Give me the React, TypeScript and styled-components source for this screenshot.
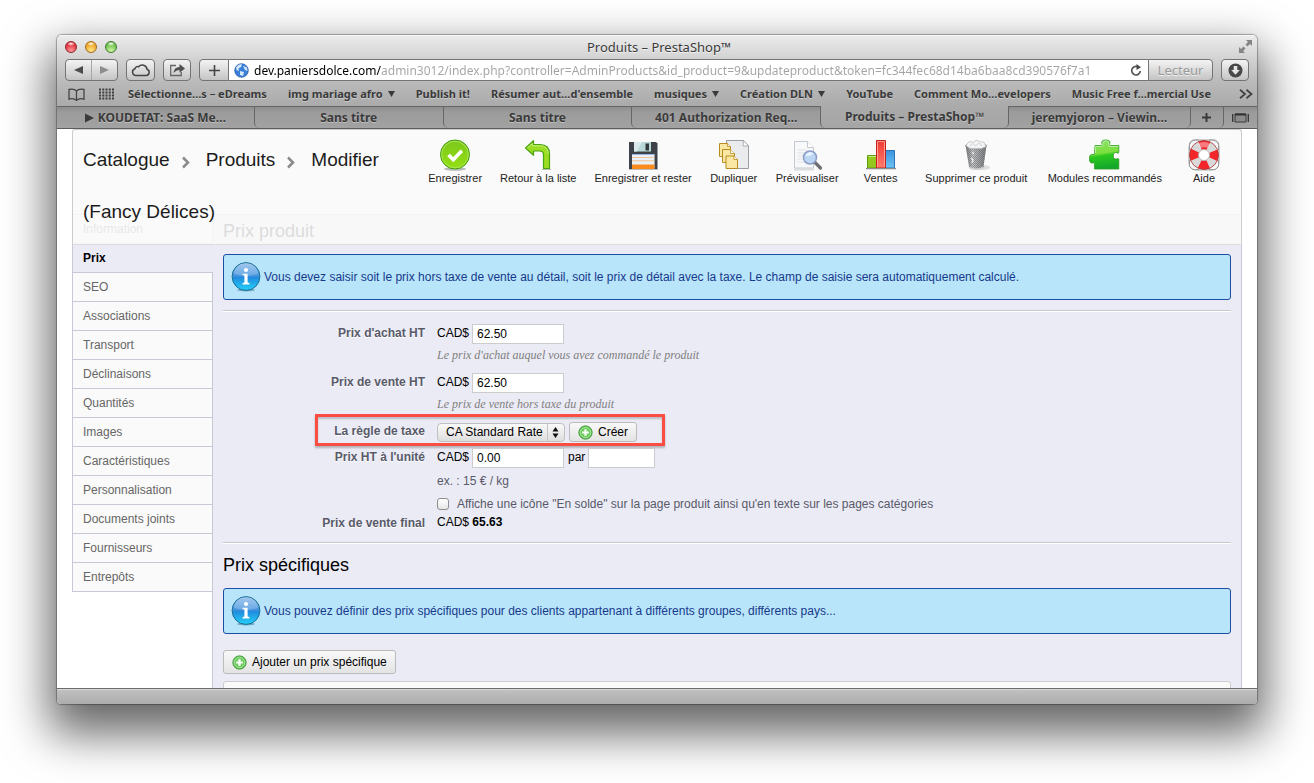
import React from 'react';
import styled, { createGlobalStyle, css } from 'styled-components';

const CHROME_FONT = '"Noto Sans", "Open Sans", sans-serif';
const PAGE_FONT = '"Liberation Sans", Arial, sans-serif';

const GlobalStyle = createGlobalStyle`
  *, *::before, *::after { box-sizing: border-box; }
  body { margin: 0; background: #fff; }
  h1, h4, p, ul { margin: 0; padding: 0; }
  ul { list-style: none; }
  button, input, select { margin: 0; font: inherit; color: inherit; }
  a { color: inherit; text-decoration: none; }
  svg { display: block; flex: none; }
`;

/* ---------- desktop and browser window ---------- */

const Desktop = styled.div`
  height: 100vh;
  padding: 35px 57px 79px;
  overflow: hidden;
  font-family: ${PAGE_FONT};
`;

const BrowserWindow = styled.div`
  display: flex;
  flex-direction: column;
  height: 100%;
  min-width: 0;
  border-radius: 5px 5px 4px 4px;
  background: #fff;
  box-shadow: 0 0 1px 1px rgba(0, 0, 0, 0.3), 0 22px 46px 8px rgba(0, 0, 0, 0.6);
  overflow: hidden;
`;

const Chrome = styled.header`
  flex: none;
  background: linear-gradient(#ececec 0, #d2d2d2 24px, #b9b9b9 48px, #aaa 72px, #a6a6a6 94px);
  border-bottom: 1px solid #5c5c5c;
  font-family: ${CHROME_FONT};
  color: #3a3a3a;
`;

const TitleBar = styled.div`
  display: grid;
  grid-template-columns: 80px 1fr 80px;
  align-items: center;
  height: 23px;
  padding: 0 4px 0 8px;
  box-shadow: inset 0 1px 0 #f6f6f6;
`;

const Lights = styled.div`
  display: flex;
  gap: 8px;
`;

const Light = styled.button<{ $dark: string; $mid: string; $glow: string }>`
  width: 12px;
  height: 12px;
  padding: 0;
  border: 1px solid ${p => p.$dark};
  border-radius: 50%;
  background: radial-gradient(ellipse 4px 2px at 50% 18%, #fff 0, transparent 100%),
    radial-gradient(circle at 50% 90%, ${p => p.$glow} 0, ${p => p.$mid} 70%);
`;

const WindowTitle = styled.div`
  text-align: center;
  font-size: 13px;
  line-height: 20px;
  white-space: nowrap;
  text-shadow: 0 1px 0 #f4f4f4;
`;

const TitleEnd = styled.div`
  display: flex;
  justify-content: flex-end;
`;

const Toolbar = styled.div`
  display: flex;
  align-items: center;
  height: 24px;
  gap: 8px;
  padding: 0 8px;
`;

const chromeButton = css`
  display: flex;
  align-items: center;
  justify-content: center;
  height: 22px;
  padding: 0;
  border: 1px solid #747474;
  background: linear-gradient(#f4f4f4, #c4c4c4);
`;

const ChromeButton = styled.button<{ $width: number }>`
  ${chromeButton}
  flex: none;
  width: ${p => p.$width}px;
  border-radius: 4px;
`;

const Segments = styled.div`
  display: flex;
  flex: none;
  width: 53px;
  border: 1px solid #747474;
  border-radius: 4px;
  background: linear-gradient(#f4f4f4, #c4c4c4);
`;

const Segment = styled.button`
  display: flex;
  flex: 1;
  align-items: center;
  justify-content: center;
  height: 20px;
  padding: 0;
  border: 0;
  background: none;
  & + & { border-left: 1px solid #a6a6a6; }
`;

const AddressGroup = styled.div`
  display: flex;
  flex: 1;
  min-width: 0;
`;

const AddButton = styled.button`
  ${chromeButton}
  width: 30px;
  border-radius: 4px 0 0 4px;
`;

const AddressBox = styled.div`
  display: flex;
  flex: 1;
  align-items: center;
  min-width: 0;
  height: 22px;
  padding: 0 6px 0 5px;
  gap: 5px;
  border: solid #747474;
  border-width: 1px 0;
  background: #fff;
`;

const AddressInput = styled.input`
  flex: 1;
  min-width: 0;
  height: 20px;
  padding: 0;
  margin-right: 4px;
  border: 0;
  outline: 0;
  color: transparent;
  background: linear-gradient(90deg, #000 127px, #a3a3a3 127px);
  background-clip: text;
  -webkit-background-clip: text;
  font-size: 12px;
`;

const RefreshButton = styled.button`
  padding: 0;
  border: 0;
  background: none;
`;

const ReaderButton = styled.button`
  ${chromeButton}
  width: 65px;
  border-radius: 0 4px 4px 0;
  color: #9a9a9a;
  font-size: 13px;
  text-shadow: 0 1px 0 #eee;
`;

const BookmarkBar = styled.nav`
  display: flex;
  align-items: center;
  height: 24px;
  padding: 0 4px 0 11px;
  gap: 14px;
`;

const Bookmarks = styled.div`
  display: flex;
  flex: 1;
  justify-content: space-between;
  min-width: 0;
  margin-right: 14px;
`;

const Bookmark = styled.a`
  display: flex;
  align-items: center;
  gap: 5px;
  font-size: 11px;
  line-height: 16px;
  font-weight: 700;
  white-space: nowrap;
  text-shadow: 0 1px 0 #ccc;
`;

const TabStrip = styled.div`
  display: flex;
  height: 22px;
`;

const Tab = styled.button<{ $grow: number; $side: 'left' | 'active' | 'right'; $edge?: boolean }>`
  flex: ${p => p.$grow} 1 0;
  display: flex;
  align-items: center;
  justify-content: center;
  gap: 4px;
  min-width: 0;
  padding: 0;
  border: 0 solid #666;
  background: linear-gradient(#8e8e8e, #9b9b9b 5px, #a2a2a2);
  font-size: 12px;
  line-height: 16px;
  font-weight: 700;
  white-space: nowrap;
  text-shadow: 0 1px 0 #c0c0c0;
  border-top-width: 1px;
  ${p => p.$side === 'left' && css`border-left-width: ${p.$edge ? 0 : 1}px; border-bottom-left-radius: 5px;`}
  ${p => p.$side === 'right' && css`border-right-width: ${p.$edge ? 0 : 1}px; border-bottom-right-radius: 5px;`}
  ${p => p.$side === 'active' && css`
    background: transparent;
    border-width: 0 1px;
    border-radius: 0 0 5px 5px;
  `}
`;

const SmallTab = styled(Tab)`
  flex: 0 0 33px;
`;

const StatusBar = styled.footer`
  flex: none;
  height: 16px;
  border-top: 1px solid #6b6b6b;
  box-shadow: inset 0 1px 0 #d8d8d8;
  background: linear-gradient(#c2c2c2, #acacac);
`;

/* ---------- web page ---------- */

const Viewport = styled.div`
  position: relative;
  flex: 1;
  min-height: 0;
  padding: 0 15px;
  overflow: hidden;
  font-size: 12px;
  line-height: 16px;
`;

const PageHeader = styled.div`
  position: absolute;
  z-index: 1;
  top: 0;
  left: 15px;
  right: 15px;
  display: flex;
  justify-content: space-between;
  height: 116px;
  padding: 4px 13px 0 10px;
  border: 1px solid #ccc;
  border-bottom-color: #ddd;
  border-radius: 3px 3px 0 0;
  background: rgba(249, 249, 249, 0.88);
`;

const Breadcrumb = styled.h1`
  flex: 0 0 325px;
  font-size: 19px;
  line-height: 52px;
  font-weight: 400;
  color: #1c1c1c;
`;

const CrumbArrow = styled.svg`
  display: inline-block;
  margin: 0 16px 0 12px;
  vertical-align: -3px;
`;

const Actions = styled.ul`
  display: flex;
  gap: 18px;
  padding-top: 5px;
`;

const ActionItem = styled.li<{ $min?: number }>`
  min-width: ${p => p.$min ?? 48}px;
`;

const ActionLink = styled.a`
  display: flex;
  flex-direction: column;
  align-items: center;
  font-size: 11px;
  line-height: 14px;
  color: #222;
  white-space: nowrap;
`;

const Columns = styled.div`
  display: flex;
  margin-top: 85px;
  min-height: 100%;
  border-top: 1px solid #ccc;
`;

const SideMenu = styled.ul`
  flex: 0 0 140px;
`;

const SideItem = styled.li<{ $active?: boolean }>`
  height: 29px;
  border: solid #c8c8d8;
  border-width: 0 0 1px 1px;
  background: #fafafa;
  color: #666;
  ${p => p.$active && css`
    position: relative;
    margin-right: -1px;
    background: #ebebf5;
    color: #000;
    font-weight: 700;
  `}
`;

const SideLink = styled.a`
  display: block;
  padding: 0 10px;
  line-height: 28px;
`;

const Content = styled.main`
  flex: 1;
  min-width: 0;
  padding: 4px 10px 0;
  border: solid #c8c8d8;
  border-width: 0 1px;
  background: #ebebf5;
`;

const SectionTitle = styled.h4`
  margin-bottom: 11px;
  font-size: 18px;
  line-height: 24px;
  font-weight: 400;
  color: #000;
`;

const Notice = styled.p`
  display: flex;
  align-items: center;
  gap: 3px;
  min-height: 46px;
  padding: 0 7px;
  border: 1px solid #1c4fa3;
  border-radius: 3px;
  background: #b8e5fa;
  color: #17398c;
`;

const Rule = styled.hr`
  height: 2px;
  margin: 10px 0 9px;
  border: 0;
  border-top: 1px solid #c8c8c8;
  background: #fff;
`;

const Form = styled.form`
  padding: 3px 0 0;
`;

const Row = styled.div<{ $tight?: boolean }>`
  position: relative;
  display: grid;
  grid-template-columns: 202px 1fr;
  column-gap: 12px;
  margin-bottom: ${p => (p.$tight ? 0 : 6)}px;
`;

const Label = styled.label`
  text-align: right;
  line-height: 18px;
  font-weight: 700;
  color: #585a69;
  text-shadow: 0 1px 0 #fff;
`;

const Line = styled.div`
  display: flex;
  align-items: center;
  gap: 4px;
  min-height: 20px;
  color: #000;
`;

const Field = styled.div`
  display: flex;
  gap: 3px;
`;

const Currency = styled.span`
  line-height: 18px;
`;

const TextInput = styled.input<{ $width: number }>`
  width: ${p => p.$width}px;
  height: 20px;
  padding: 0 4px;
  border: 1px solid #ccc;
  background: #fff;
`;

const Hint = styled.div`
  font-family: "Liberation Serif", Georgia, serif;
  font-size: 12px;
  line-height: 23px;
  font-style: italic;
  color: #7f7f7f;
`;

const Example = styled.div`
  line-height: 26px;
  color: #585a69;
`;

const CheckLine = styled.div`
  display: flex;
  align-items: center;
  gap: 8px;
  height: 20px;
  color: #585a69;
`;

const CheckBox = styled.input`
  appearance: none;
  width: 12px;
  height: 12px;
  border: 1px solid #8e8e8e;
  border-radius: 3px;
  background: linear-gradient(#fff, #e6e6e6);
`;

const SelectWrap = styled.div`
  position: relative;
  width: 128px;
`;

const Select = styled.select`
  appearance: none;
  display: block;
  width: 100%;
  height: 19px;
  padding: 0 18px 0 8px;
  border: 1px solid #c0c0c0;
  border-radius: 4px;
  background: linear-gradient(90deg, transparent 109px, #c4c4c4 109px, #c4c4c4 110px, transparent 110px),
    linear-gradient(#fafafa, #dedede);
  line-height: 16px;
`;

const SelectArrows = styled.svg`
  position: absolute;
  top: 4px;
  right: 6px;
  pointer-events: none;
`;

const GreyButton = styled.button<{ $tall?: boolean }>`
  display: flex;
  align-items: center;
  gap: 5px;
  height: ${p => (p.$tall ? 24 : 20)}px;
  padding: 0 8px;
  border: 1px solid #bbb;
  border-radius: 3px;
  background: linear-gradient(#f9f9f9, #e3e3e3);
  color: #000;
  white-space: nowrap;
`;

const Highlight = styled.div`
  position: absolute;
  top: -8px;
  left: 92px;
  width: 350px;
  height: 32px;
  border: 3px solid #fc4d43;
  box-shadow: 0 2px 2px rgba(0, 0, 0, 0.25), inset 0 2px 2px rgba(0, 0, 0, 0.2);
  pointer-events: none;
`;

const AddRow = styled.div`
  padding: 16px 0 7px;
`;

const PricePanel = styled.section`
  height: 60px;
  border: 1px solid #ccc;
  border-radius: 3px 3px 0 0;
  background: #fafafa;
`;

/* ---------- icons ---------- */

const InfoIcon = () => (
  <svg width="30" height="30" viewBox="0 0 30 30">
    <defs>
      <linearGradient id="info" x1="0" y1="0" x2="0" y2="1">
        <stop offset="0" stopColor="#8ab9e8" /><stop offset=".5" stopColor="#3c8fdc" />
        <stop offset=".52" stopColor="#2189dd" /><stop offset="1" stopColor="#24d2fa" />
      </linearGradient>
    </defs>
    <ellipse cx="15" cy="28" rx="9" ry="1.5" fill="#4b8ba8" opacity=".7" />
    <circle cx="15" cy="14.5" r="13.9" fill="url(#info)" stroke="#176f96" strokeWidth="1" />
    <path d="M3 12a12 11 0 0 1 24 0q-12 4-24 0z" fill="#fff" opacity=".22" />
    <circle cx="15" cy="8" r="2.1" fill="#fff" />
    <path d="M11.6 11.7h5v8.8l1.8.6v1.3h-6.8v-1.3l1.8-.6v-6.9l-1.8-.6z" fill="#fff" />
  </svg>
);

const PlusIcon = () => (
  <svg width="15" height="15" viewBox="0 0 15 15">
    <circle cx="7.5" cy="7.5" r="6.7" fill="#3fa832" stroke="#3f9a3a" strokeWidth=".8" />
    <circle cx="7.5" cy="7.5" r="5.4" fill="#6fce60" stroke="#c2ecb8" strokeWidth=".9" />
    <path d="M7.5 4.2v6.6M4.2 7.5h6.6" stroke="#fff" strokeWidth="2.2" />
  </svg>
);

const SaveIcon = () => (
  <svg width="32" height="32" viewBox="0 0 32 32">
    <defs>
      <linearGradient id="save" x1="0" y1="0" x2="0" y2="1">
        <stop offset="0" stopColor="#7cc71c" /><stop offset="1" stopColor="#94e012" />
      </linearGradient>
    </defs>
    <ellipse cx="16" cy="30" rx="11" ry="1.8" fill="#bbb" />
    <circle cx="16" cy="15.5" r="14.5" fill="url(#save)" stroke="#3f9a10" />
    <circle cx="16" cy="15.5" r="13.3" fill="none" stroke="#aee65a" />
    <path d="M9.5 16l4.8 4.7 8.5-9" fill="none" stroke="#fff" strokeWidth="3.6" />
  </svg>
);

const BackIcon = () => (
  <svg width="32" height="32" viewBox="0 0 32 32">
    <path d="M3.5 9l8-7.3v4h6.7q9.3 0 9.3 9.3v14.5h-6V15.500q0-3.500-4-3.500h-6v4.300z" fill="#9add22" stroke="#4aa311" strokeWidth="1.2" strokeLinejoin="round" />
    <path d="M5.500 9l5-4.600v2.400h7.500q8 0 8.300 8" fill="none" stroke="#c8f07c" />
    <path d="M20 30.500h9" stroke="#bbb" />
  </svg>
);

const FloppyIcon = () => (
  <svg width="32" height="32" viewBox="0 0 32 32">
    <path d="M2 30.500h29" stroke="#bbb" />
    <path d="M2 3h27l1.500 1.500V30H2z" fill="#3d4248" />
    <path d="M7 3h17v9.500H7z" fill="#b9d9d8" /><path d="M7 3h8l-5 9.500H7z" fill="#d8ebea" />
    <path d="M18.500 4.500h3.500v7h-3.500z" fill="#33383d" />
    <path d="M5 15h22.500v14.500H5z" fill="#e9effb" />
    <path d="M5 18.500h22.500M5 21.800h22.500" stroke="#f2c68e" />
    <path d="M5 15.500h22.500" stroke="#9cb3de" />
    <path d="M5 25.500h22.500V30H5z" fill="#f98c1c" />
  </svg>
);

const CopyIcon = () => (
  <svg width="32" height="32" viewBox="0 0 32 32">
    <path d="M8.500 1.500h17l5 5.500v22.500h-22z" fill="#e9ebed" stroke="#9a9ea2" />
    <path d="M25.500 1.500l-.5 5.500h5.500z" fill="#fff" stroke="#9a9ea2" strokeWidth=".8" />
    <g fill="#fbe7a4" stroke="#b98c1f">
      <path d="M1.500 4.500h8l3 3v10h-11z" /><path d="M4.500 10.500h8l4 4v9h-12z" /><path d="M8 17h8l3.500 3.500v9H8z" />
      <path d="M9.500 4.500v3h3M12.500 10.500v4h4M16 17v3.500h3.500" fill="#fff" strokeWidth=".8" />
    </g>
  </svg>
);

const PreviewIcon = () => (
  <svg width="32" height="32" viewBox="0 0 32 32">
    <path d="M3 30.500h20" stroke="#ddd" strokeWidth="2" />
    <path d="M3.500 2.500h13l6 6v20.500h-19z" fill="#f7f8fa" stroke="#c5c9cf" />
    <path d="M16.500 2.500v6h6" fill="#fff" stroke="#c5c9cf" />
    <path d="M6.500 11h9M6.500 14h7M6.500 17h6M6.500 20h6M6.500 23h7" stroke="#dde0e6" />
    <path d="M23.500 23l6 6" stroke="#6e6e72" strokeWidth="3.200" strokeLinecap="round" />
    <circle cx="19" cy="18.500" r="6.500" fill="#bcd6f6" stroke="#8c9cc4" strokeWidth="1.500" />
    <path d="M14.500 17a5 5 0 0 1 8-2.500q-3 3-8 2.500z" fill="#eaf4ff" />
  </svg>
);

const SalesIcon = () => (
  <svg width="32" height="32" viewBox="0 0 32 32">
    <defs>
      <linearGradient id="red" x1="0" y1="0" x2="0" y2="1"><stop offset="0" stopColor="#f03a33" /><stop offset="1" stopColor="#ff7b6e" /></linearGradient>
      <linearGradient id="blue" x1="0" y1="0" x2="0" y2="1"><stop offset="0" stopColor="#3a93dd" /><stop offset="1" stopColor="#70c3f5" /></linearGradient>
    </defs>
    <path d="M2.500 16.500h9V29h-9z" fill="#95c81f" stroke="#5b9c13" /><path d="M3.500 17.500h7.500" stroke="#cbe77c" />
    <path d="M20.500 11.500h9V29h-9z" fill="url(#blue)" stroke="#2874b5" />
    <path d="M11.500 1.500h9V29h-9z" fill="url(#red)" stroke="#c4201c" /><path d="M12.500 28V2.500h7V28" fill="none" stroke="#ff9b92" />
    <path d="M1 29.700h30" stroke="#8c8c8c" strokeWidth="1.300" />
  </svg>
);

const TrashIcon = () => (
  <svg width="32" height="32" viewBox="0 0 32 32">
    <defs>
      <pattern id="mesh" width="2" height="2" patternUnits="userSpaceOnUse"><path d="M0 0h1v1H0zM1 1h1v1H1z" fill="#5d6063" /></pattern>
      <linearGradient id="bin"><stop offset="0" stopColor="#77797b" /><stop offset=".35" stopColor="#c9cbcd" /><stop offset="1" stopColor="#77797c" /></linearGradient>
    </defs>
    <ellipse cx="22" cy="28.500" rx="8" ry="2.500" fill="#ddd" />
    <path d="M5.500 6h21L23.300 29q-7 3-14 0z" fill="url(#bin)" />
    <path d="M5.500 6h21L23.300 29q-7 3-14 0z" fill="url(#mesh)" opacity=".55" />
    <path d="M9.300 28.500q7 3.500 14 0" fill="none" stroke="#d4d4d4" strokeWidth="1.500" />
    <path d="M11 19l2 2-1 3M12 13l2 2" fill="none" stroke="#eee" strokeWidth="1.200" />
    <ellipse cx="16" cy="6.800" rx="10.800" ry="3.500" fill="#8d8f91" />
    <path d="M6 6.500l3.200-4 4 .8 3-2.100 4.300 1.600 3.500.4 2 4.200-4.400 2-5.200.2-6.400-.2z" fill="#f3f4f5" stroke="#b7b9bb" strokeWidth=".7" />
    <path d="M10 7l3-2.500 2.500 2.500 3.500-3 3 3" fill="none" stroke="#c6c8ca" strokeWidth=".8" />
  </svg>
);

const PuzzleIcon = () => (
  <svg width="32" height="32" viewBox="0 0 32 32">
    <defs>
      <linearGradient id="puz" x1="0" y1="0" x2=".15" y2="1">
        <stop offset="0" stopColor="#8be06c" /><stop offset=".5" stopColor="#7cdf3e" /><stop offset=".6" stopColor="#2cc81e" /><stop offset="1" stopColor="#14a92a" />
      </linearGradient>
    </defs>
    <path d="M6 6.500h6.500q1.500-.4.300-2Q12 1 16.800 1t4 3.500q-1.200 1.600.3 2h8.700v7q-.5 1.300-1.800.2-3.700-1-3.700 3t3.700 3.200q1.300-1.100 1.800.2V30H5.500v-5.500q-.3-1.500-1.500-.4Q.3 24.300.3 19.700t3.700-4.400q1.300 1 1.500-.5z" fill="url(#puz)" stroke="#2e9d22" strokeWidth=".8" />
    <path d="M6.500 14V7.500H13q2-1.200.8-3.500.3-2 3-2.200 3.300.2 2.900 3L20 7.500h9" fill="none" stroke="#c4f2b0" strokeWidth=".8" />
  </svg>
);

const HelpIcon = () => (
  <svg width="32" height="32" viewBox="0 0 32 32">
    <path d="M8 1h16q7 1 7 7v16q-1 7-7 7H8q-7-1-7-7V8q1-7 7-7z" fill="#fafafa" stroke="#a5a5a5" />
    <path d="M1.500 11V4l3-3H11M21 1h6.500l3 3v7M30.500 21v6.500l-3 3H21M11 30.500H4.500l-3-3V21" fill="none" stroke="#9a9a9a" />
    <circle cx="16" cy="16" r="10" fill="none" stroke="#d9d9d9" strokeWidth="9" />
    <circle cx="16" cy="16" r="10" fill="none" stroke="#f3262b" strokeWidth="9" strokeDasharray="8.600 7.108" strokeDashoffset="4.300" />
    <path d="M9.500 5a13 13 0 0 1 13 0l-3 4a8 8 0 0 0-7 0z" fill="#fff" opacity=".4" />
    <circle cx="16" cy="16" r="14.500" fill="none" stroke="#a43434" strokeWidth=".8" />
    <circle cx="16" cy="16" r="5.500" fill="#fff" stroke="#a9a9a9" strokeWidth=".8" />
  </svg>
);

const DownTriangle = () => (
  <svg width="7" height="6" viewBox="0 0 7 6"><path d="M0 0h7L3.500 6z" fill="#3a3a3a" /></svg>
);

const GlobeIcon = () => (
  <svg width="15" height="15" viewBox="0 0 15 15">
    <circle cx="7.500" cy="7.500" r="6.800" fill="#3a80d8" stroke="#2355a0" strokeWidth=".7" />
    <path d="M2 4.500Q5 .5 8 1.500L7 4 4.500 5.500 5 8 2.500 7zM9 3l4 1.500L13.500 8 11 7zM6 8l4 1-1 4-3-1z" fill="#d3e8fb" />
  </svg>
);

/* ---------- data ---------- */

const bookmarks: { label: string; folder?: boolean }[] = [
  { label: 'Sélectionne…s – eDreams' },
  { label: 'img mariage afro', folder: true },
  { label: 'Publish it!' },
  { label: "Résumer aut…d'ensemble" },
  { label: 'musiques', folder: true },
  { label: 'Création DLN', folder: true },
  { label: 'YouTube' },
  { label: 'Comment Mo…evelopers' },
  { label: 'Music Free f…mercial Use' },
];

const actions: { label: string; icon: React.ReactNode; min?: number }[] = [
  { label: 'Enregistrer', icon: <SaveIcon /> },
  { label: 'Retour à la liste', icon: <BackIcon /> },
  { label: 'Enregistrer et rester', icon: <FloppyIcon /> },
  { label: 'Dupliquer', icon: <CopyIcon /> },
  { label: 'Prévisualiser', icon: <PreviewIcon /> },
  { label: 'Ventes', icon: <SalesIcon /> },
  { label: 'Supprimer ce produit', icon: <TrashIcon />, min: 107 },
  { label: 'Modules recommandés', icon: <PuzzleIcon /> },
  { label: 'Aide', icon: <HelpIcon /> },
];

const sections = [
  'Information', 'Prix', 'SEO', 'Associations', 'Transport', 'Déclinaisons', 'Quantités', 'Images',
  'Caractéristiques', 'Personnalisation', 'Documents joints', 'Fournisseurs', 'Entrepôts',
];

const Arrow = () => (
  <CrumbArrow width="8" height="13" viewBox="0 0 8 13">
    <path d="M1 1.500l5 5-5 5" fill="none" stroke="#8a8a8a" strokeWidth="2.500" />
  </CrumbArrow>
);

function BrowserChrome() {
  return (
    <Chrome>
      <TitleBar>
        <Lights>
          <Light aria-label="Fermer" $dark="#8f2529" $mid="#e3303c" $glow="#ff9a9a" />
          <Light aria-label="Réduire" $dark="#a06a1c" $mid="#eda324" $glow="#ffe98a" />
          <Light aria-label="Agrandir" $dark="#3f7a32" $mid="#6bbf4c" $glow="#d0f7a4" />
        </Lights>
        <WindowTitle>Produits – PrestaShop™</WindowTitle>
        <TitleEnd>
          <svg width="15" height="15" viewBox="0 0 15 15">
            <path d="M8 1h6v6l-2-2-2.500 2.500-2-2L10 3zM7 14H1V8l2 2 2.500-2.500 2 2L5 12z" fill="#858585" />
          </svg>
        </TitleEnd>
      </TitleBar>
      <Toolbar>
        <Segments>
          <Segment aria-label="Précédent"><svg width="9" height="8" viewBox="0 0 9 8"><path d="M9 0v8L0 4z" fill="#4c4c4c" /></svg></Segment>
          <Segment aria-label="Suivant"><svg width="9" height="8" viewBox="0 0 9 8"><path d="M0 0v8l9-4z" fill="#8d8d8d" /></svg></Segment>
        </Segments>
        <ChromeButton $width={29} aria-label="Onglets iCloud">
          <svg width="20" height="14" viewBox="0 0 20 14"><path d="M4.500 12.500a3.500 3.500 0 0 1-.5-6.800 2.800 2.800 0 0 1 3.700-2A4.700 4.700 0 0 1 16 6.300a3.200 3.200 0 0 1-.7 6.200z" fill="none" stroke="#444" strokeWidth="1.500" /></svg>
        </ChromeButton>
        <ChromeButton $width={28} aria-label="Partager">
          <svg width="17" height="14" viewBox="0 0 17 14">
            <path d="M7 2.500H1.700v10h10.600V9" fill="none" stroke="#666" strokeWidth="1.300" />
            <path d="M4.500 10q.5-6 6-6V1l5.500 4.500-5.500 4.300V7q-3.500 0-6 3z" fill="#505050" />
          </svg>
        </ChromeButton>
        <AddressGroup>
          <AddButton aria-label="Ajouter un signet">
            <svg width="11" height="11" viewBox="0 0 11 11"><path d="M5.500 0v11M0 5.500h11" stroke="#444" strokeWidth="1.600" /></svg>
          </AddButton>
          <AddressBox>
            <GlobeIcon />
            <AddressInput
              aria-label="Adresse"
              readOnly
              value="dev.paniersdolce.com/admin3012/index.php?controller=AdminProducts&id_product=9&updateproduct&token=fc344fec68d14ba6baa8cd390576f7a1"
            />
            <RefreshButton aria-label="Actualiser">
              <svg width="12" height="13" viewBox="0 0 12 13">
                <path d="M9.200 3.800A4.300 4.300 0 1 0 10.300 7" fill="none" stroke="#555" strokeWidth="1.700" />
                <path d="M6.500 0L11 3.200 6.500 6z" fill="#484848" />
              </svg>
            </RefreshButton>
          </AddressBox>
          <ReaderButton>Lecteur</ReaderButton>
        </AddressGroup>
        <ChromeButton $width={28} aria-label="Téléchargements">
          <svg width="15" height="15" viewBox="0 0 15 15">
            <circle cx="7.500" cy="7.500" r="7" fill="#484848" />
            <path d="M5.700 3h3.600v4h2.500l-4.300 4.800L3.200 7h2.500z" fill="#e6e6e6" />
          </svg>
        </ChromeButton>
      </Toolbar>
      <BookmarkBar aria-label="Signets">
        <svg width="17" height="13" viewBox="0 0 17 13">
          <path d="M8.500 3v9.200Q5 9.500 1 11.200V1.500Q6 .2 8.500 3q2.500-2.800 7.500-1.500v9.700q-4-1.700-7.500 1z" fill="none" stroke="#444" strokeWidth="1.300" />
        </svg>
        <svg width="15" height="12" viewBox="0 0 15 12">
          <path d="M0 1.500h15M0 4.500h15M0 7.500h15M0 10.500h15" stroke="#3f3f3f" strokeWidth="2" strokeDasharray="2 1.250" />
        </svg>
        <Bookmarks>
          {bookmarks.map(b => (
            <Bookmark key={b.label} href="#">{b.label}{b.folder && <DownTriangle />}</Bookmark>
          ))}
        </Bookmarks>
        <svg width="14" height="10" viewBox="0 0 14 10">
          <path d="M1 .8L6 5 1 9.200M7.500.8l5 4.200-5 4.200" fill="none" stroke="#444" strokeWidth="1.800" />
        </svg>
      </BookmarkBar>
      <TabStrip>
        <Tab $grow={198} $side="left" $edge>
          <svg width="9" height="10" viewBox="0 0 9 10"><path d="M0 .5v9L9 5z" fill="#3a3a3a" /></svg>
          KOUDETAT: SaaS Me…
        </Tab>
        <Tab $grow={189} $side="left">Sans titre</Tab>
        <Tab $grow={189} $side="left">Sans titre</Tab>
        <Tab $grow={189} $side="left">401 Authorization Req…</Tab>
        <Tab $grow={188} $side="active">Produits – PrestaShop™</Tab>
        <Tab $grow={182} $side="right">jeremyjoron – Viewin…</Tab>
        <SmallTab $grow={0} $side="right" aria-label="Nouvel onglet">
          <svg width="9" height="9" viewBox="0 0 9 9"><path d="M4.500 0v9M0 4.500h9" stroke="#3a3a3a" strokeWidth="2" /></svg>
        </SmallTab>
        <SmallTab $grow={0} $side="right" $edge aria-label="Tous les onglets">
          <svg width="17" height="10" viewBox="0 0 17 10"><path d="M.7 1v8M16.300 1v8" stroke="#3a3a3a" strokeWidth="1.400" /><path d="M3 1h11v8H3z" fill="#8b8b8b" stroke="#3a3a3a" /><path d="M3 1.500h11" stroke="#333" strokeWidth="2" /></svg>
        </SmallTab>
      </TabStrip>
    </Chrome>
  );
}

export default function App() {
  return (
    <>
      <GlobalStyle />
      <Desktop>
        <BrowserWindow>
          <BrowserChrome />
          <Viewport>
            <PageHeader>
              <Breadcrumb>Catalogue<Arrow />Produits<Arrow />Modifier (Fancy Délices)</Breadcrumb>
              <Actions>
                {actions.map(a => (
                  <ActionItem key={a.label} $min={a.min}>
                    <ActionLink href="#">{a.icon}{a.label}</ActionLink>
                  </ActionItem>
                ))}
              </Actions>
            </PageHeader>
            <Columns>
              <SideMenu>
                {sections.map(name => (
                  <SideItem key={name} $active={name === 'Prix'}>
                    <SideLink href="#">{name}</SideLink>
                  </SideItem>
                ))}
              </SideMenu>
              <Content>
                <SectionTitle>Prix produit</SectionTitle>
                <Notice>
                  <InfoIcon />
                  Vous devez saisir soit le prix hors taxe de vente au détail, soit le prix de détail avec la taxe. Le champ de saisie sera automatiquement calculé.
                </Notice>
                <Rule />
                <Form>
                  <Row>
                    <Label htmlFor="cost">Prix d'achat HT</Label>
                    <div>
                      <Field><Currency>CAD$</Currency><TextInput id="cost" $width={92} defaultValue="62.50" /></Field>
                      <Hint>Le prix d'achat auquel vous avez commandé le produit</Hint>
                    </div>
                  </Row>
                  <Row>
                    <Label htmlFor="price">Prix de vente HT</Label>
                    <div>
                      <Field><Currency>CAD$</Currency><TextInput id="price" $width={92} defaultValue="62.50" /></Field>
                      <Hint>Le prix de vente hors taxe du produit</Hint>
                    </div>
                  </Row>
                  <Row>
                    <Label htmlFor="tax">La règle de taxe</Label>
                    <Line>
                      <SelectWrap>
                        <Select id="tax"><option>CA Standard Rate</option></Select>
                        <SelectArrows width="7" height="11" viewBox="0 0 7 11"><path d="M3.500 0L6.500 4.500h-6zM3.500 11l3-4.500h-6z" fill="#111" /></SelectArrows>
                      </SelectWrap>
                      <GreyButton type="button"><PlusIcon />Créer</GreyButton>
                    </Line>
                    <Highlight />
                  </Row>
                  <Row $tight>
                    <Label htmlFor="unit">Prix HT à l'unité</Label>
                    <div>
                      <Line>
                        <Field><Currency>CAD$</Currency><TextInput id="unit" $width={92} defaultValue="0.00" /></Field>
                        <Field><Currency as="label" htmlFor="per">par</Currency><TextInput id="per" $width={67} /></Field>
                      </Line>
                      <Example>ex. : 15 € / kg</Example>
                      <CheckLine>
                        <CheckBox id="sale" type="checkbox" />
                        <label htmlFor="sale">Affiche une icône "En solde" sur la page produit ainsi qu'en texte sur les pages catégories</label>
                      </CheckLine>
                    </div>
                  </Row>
                  <Row $tight>
                    <Label as="span">Prix de vente final</Label>
                    <div>CAD$ <b>65.63</b></div>
                  </Row>
                </Form>
                <Rule />
                <SectionTitle>Prix spécifiques</SectionTitle>
                <Notice>
                  <InfoIcon />
                  Vous pouvez définir des prix spécifiques pour des clients appartenant à différents groupes, différents pays...
                </Notice>
                <AddRow>
                  <GreyButton type="button" $tall><PlusIcon />Ajouter un prix spécifique</GreyButton>
                </AddRow>
                <PricePanel />
              </Content>
            </Columns>
          </Viewport>
          <StatusBar />
        </BrowserWindow>
      </Desktop>
    </>
  );
}
